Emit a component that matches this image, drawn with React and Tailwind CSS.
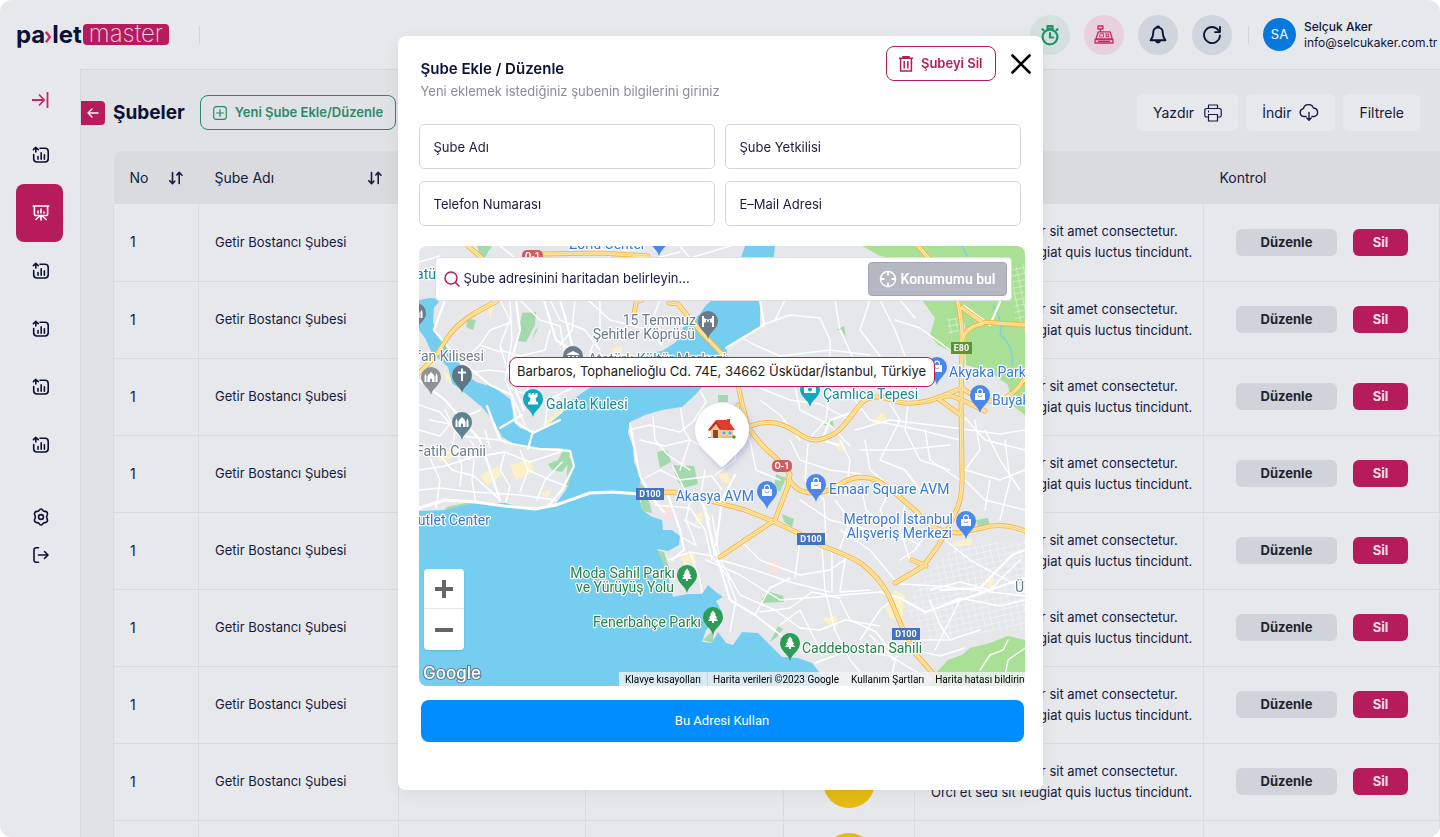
import { useState } from 'react'

const NAV_COUNT = 6
const rows = [1, 1, 1, 1, 1, 1, 1, 1, 1]

function ReportIcon() {
  return (
    <svg viewBox="0 0 18 18" className="w-[18px] h-[18px]" fill="none" stroke="currentColor" strokeWidth="1.6" strokeLinecap="round" strokeLinejoin="round">
      <path d="M8 2.2h5a3.2 3.2 0 0 1 3.2 3.2v7.4a3.2 3.2 0 0 1-3.2 3.2H4.9a3.2 3.2 0 0 1-3.2-3.2V8.5" />
      <path d="M3.8 6V1.800M1.400 3.600l2.400-2.200 2.400 2.200" />
      <path d="M6 10.500v2.700M9.200 6.800v6.400M12.400 8.800v4.400" />
    </svg>
  )
}

function BoardIcon() {
  return (
    <svg viewBox="0 0 18 18" className="w-[18px] h-[18px]" fill="none" stroke="currentColor" strokeWidth="1.6" strokeLinecap="round" strokeLinejoin="round">
      <path d="M1.200 2h15.600M2.400 2v8.200a1.300 1.300 0 0 0 1.300 1.300h10.600a1.300 1.300 0 0 0 1.300-1.300V2" />
      <path d="M6 9V7M9 9V5M12 9V8M9 11.500v4.500M7.800 12l-4 3.500M10.200 12l4 3.500" />
    </svg>
  )
}

function SortIcon() {
  return (
    <svg viewBox="0 0 16 14" className="w-4 h-[14px]" fill="none" stroke="currentColor" strokeWidth="1.6" strokeLinecap="round" strokeLinejoin="round">
      <path d="M4.500 1.500v11M1.700 9.800l2.800 2.800 2.300-2.400M11.200 12.500v-11M8.800 4l2.400-2.700L14 4.200" />
    </svg>
  )
}

function TimerIcon() {
  return (
    <svg viewBox="0 0 20 22" className="w-5 h-[22px]" fill="none" stroke="currentColor" strokeWidth="2.2" strokeLinecap="round" strokeLinejoin="round">
      <circle cx="10" cy="13" r="7.400" />
      <path d="M7.500 2h5v2.500h-5zM10 9v4.500h3.200M2.500 5.200l1 1M17.500 5.200l-1 1" />
    </svg>
  )
}

function RegisterIcon() {
  return (
    <svg viewBox="0 0 20 19" className="w-5 h-[19px]" fill="none" stroke="currentColor" strokeWidth="1.3" strokeLinejoin="round">
      <path d="M4 1h5v3H4zM6.500 4v2.800M4.300 6.800h12l2 7.200H1.900zM1 14.500h18V18H1zM4 16.300h12" />
      <path d="M6 8.700h3.500v3.200H5.400zM11.200 9h4M11.500 11.800h4M12.300 9v2.800M14.300 9v2.800" strokeWidth="0.9" />
    </svg>
  )
}

function BellIcon() {
  return (
    <svg viewBox="0 0 18 20" className="w-[18px] h-5" fill="none" stroke="currentColor" strokeWidth="1.9" strokeLinecap="round" strokeLinejoin="round">
      <path d="M9 2.600c-3 0-4.700 2.100-4.700 4.800 0 4-.8 5.600-2.700 7.900h14.800c-1.900-2.300-2.700-3.900-2.700-7.900C13.700 4.700 12 2.600 9 2.600zM7.700 2.200a1.500 1.500 0 0 1 2.600 0M6.800 15.800a2.300 2.300 0 0 0 4.400 0" />
    </svg>
  )
}

function RefreshIcon() {
  return (
    <svg viewBox="0 0 20 20" className="w-5 h-5" fill="none" stroke="currentColor" strokeWidth="1.8" strokeLinecap="round" strokeLinejoin="round">
      <path d="M18 10.500a8 8 0 1 1-1.600-5.300L17.800 7M18 2v5.100h-5" />
    </svg>
  )
}

function PrinterIcon() {
  return (
    <svg viewBox="0 0 18 18" className="w-[18px] h-[18px]" fill="none" stroke="currentColor" strokeWidth="1.2" strokeLinejoin="round">
      <path d="M4.500 4.500V1h9v3.500M4.500 13H2.400A1.600 1.600 0 0 1 .8 11.400V6.300a1.800 1.800 0 0 1 1.800-1.800h12.800a1.800 1.800 0 0 1 1.800 1.800v5.100a1.600 1.600 0 0 1-1.600 1.600h-2.100M4.500 10.500h9V17h-9z" />
      <path d="M4 7.500h1" strokeWidth="1.8" />
    </svg>
  )
}

function CloudIcon() {
  return (
    <svg viewBox="0 0 20 18" className="w-5 h-[18px]" fill="none" stroke="currentColor" strokeWidth="1.4" strokeLinecap="round" strokeLinejoin="round">
      <path d="M7 12.500H4.800a4 4 0 0 1-.4-7.900A5.300 5.300 0 0 1 14.500 4a4.300 4.300 0 0 1 .6 8.500H13M10 8.500V16M7.800 14l2.200 2.200 2.200-2.200" />
    </svg>
  )
}

/* ---------- map drawing ---------- */

const WATER = [
  'M419 300 L430 298 441 299 434 308 433 322 438 336 449 349 458 360 463 372 476 382 495 388 510 399 513 412 514 422 520 428 533 432 548 425 562 413 572 400 582 393 600 380 622 363 642 354 662 351 676 342 684 326 700 314 706 305 712 300 724 284 738 266 745 246 775 246 773 262 762 285 760 300 760 327 742 337 727 348 726 362 712 378 702 387 695 395 682 407 662 410 645 415 630 422 628 433 633 447 634 462 641 478 638 492 642 510 652 517 662 520 663 530 672 530 680 536 679 545 668 551 657 549 663 563 669 580 673 597 687 594 702 594 708 585 716 592 723 597 716 601 722 612 716 620 706 630 702 642 712 643 718 632 726 643 733 645 742 632 758 633 772 647 782 657 798 658 812 663 820 673 829 686 L419 686 419 511 445 510 475 503 505 503 532 510 555 505 568 487 573 467 571 450 558 448 528 448 512 443 502 437 495 423 482 407 465 393 452 383 448 367 432 353 425 338 419 330Z',
]

const GREEN = [
  'M862 246H1025V415L1012 405 1008 385 990 372 966 365 965 325 956 300 940 290 914 262 880 256Z',
  'M922 300H958L960 345 952 352 938 345 930 335 935 318Z',
  'M935 674 948 660 962 655 970 648 990 643 1008 636 1025 640V686H930Z',
  'M522 313 536 312 535 325 526 342 517 341Z',
  'M468 319 476 320 473 330 466 327Z',
  'M535 331 539 326 532 341Z',
  'M447 507 470 502 488 507 500 512 480 513 460 516 440 514Z',
  'M548 464 558 460 564 449 570 452 568 464 562 472 552 470Z',
  'M568 455 574 462 572 478 566 490Z',
  'M633 474 644 487 650 505 652 513 642 511 640 495Z',
  'M672 465 694 466 698 484 684 488 678 482Z',
  'M656 550 664 552 671 574 664 566Z',
  'M703 640 714 630 713 643Z',
  'M762 599 770 592 783 596 784 602 763 603Z',
  'M770 642 778 626 783 629 777 637Z',
  'M776 474 786 478 780 492 774 488Z',
  'M782 514 794 519 792 527 784 522Z',
  'M976 520 988 518 990 526 978 528Z',
  'M823 425 832 418 834 426Z',
  'M836 330 844 326 846 338 842 330Z',
  'M488 382 493 388 484 392Z',
  'M657 452 667 450 671 462 660 468Z',
  'M718 395H728V402H718Z',
  'M477 246H492L482 262Z',
]

const YELLOW = [
  'M444 372 456 378 452 384 446 380Z', 'M480 476 498 466 500 476 488 485Z', 'M510 465 530 460 534 472 516 480Z',
  'M870 425 882 412 887 420 876 424Z', 'M836 443 844 440 844 452 838 450Z', 'M822 618 836 616 838 626 830 626Z',
  'M680 555 694 552 696 562 684 565Z', 'M885 607 895 590 905 595 902 620 890 618Z', 'M556 412 568 408 562 424 542 426Z',
  'M488 308 494 306 490 320Z', 'M612 348 622 346 622 356 614 355Z', 'M550 276 556 298 544 290Z', 'M952 542 972 538 972 545 954 546Z',
  'M985 578 994 576 994 588 986 586Z', 'M695 514 703 512 702 524 696 524Z', 'M435 452 450 448 452 458 440 462Z', 'M540 494 552 488 548 498Z',
  'M718 474 728 472 732 484 722 482Z',
]

const PINK = ['M662 508 672 504 676 516 668 520 664 516Z', 'M768 562 778 560 780 574 770 572Z', 'M904 624 914 622 914 628 906 630Z', 'M680 458 688 454 684 462Z']

// white city streets, thin
const STREETS = [
  '419,448 440,455 452,470 474,476 500,500', '419,470 445,466 470,458 505,452 530,462 560,452', '474,460 472,480 476,503',
  '430,458 440,480 436,508', '419,490 440,488 474,492 520,495 556,500', '455,448 462,466 460,486', '505,452 500,470 510,486 506,502',
  '520,450 528,470 520,492', '528,470 550,480 566,486', '445,410 455,430 452,450 470,460', '419,405 440,412 460,436 498,440',
  '430,420 450,424 480,410', '470,440 480,456 505,452', '419,430 440,436 450,424', '537,500 545,480 562,462', '485,430 490,448',
  '445,300 470,296 500,300 510,320 500,345 510,380', '510,300 512,340 505,380 525,425', '520,300 540,320 560,326 564,350', '550,300 560,320 585,330 600,350',
  '575,300 572,330 560,345', '588,300 610,320 650,330', '600,300 600,330 590,352', '463,360 480,345 490,330 512,322', '475,372 490,370 505,372',
  '510,388 540,400 560,398', '500,350 520,356 545,350 550,330', '480,345 500,352', '545,426 548,400 572,388', '526,380 530,400',
  '419,262 440,256', '500,246 520,262', '600,246 612,260', '620,246 640,262 680,252', '660,300 648,330 662,345', '680,246 690,258 730,246',
  '628,430 650,425 680,432 695,420', '653,417 655,440 668,455 690,470', '640,440 665,446 690,440 712,452', '680,405 684,430 690,440 680,470',
  '645,478 660,470 680,480 712,476 722,490', '700,390 706,402 694,420', '705,470 700,500 710,520', '672,465 690,500 686,520 696,545',
  '655,505 690,508 705,530 712,560', '695,545 680,536', '668,560 690,552 712,556 730,580', '690,552 700,580 702,592', '684,520 700,528',
  '712,515 720,560 740,595 775,610 800,628', '706,560 740,575 780,600 830,596 880,592', '720,560 755,570 790,582 830,592',
  '740,540 760,560 800,575 830,570 850,556', '755,615 770,588 790,578', '800,540 795,578', '822,548 825,590 835,630 850,660 860,672',
  '832,550 832,592', '760,612 790,608 812,592 840,598', '780,625 800,610 815,640 822,656', '800,628 820,630 845,620 880,626',
  '840,600 850,620 876,632 890,650', '860,640 880,610 892,600', '845,560 840,592 870,590', '870,635 895,660 890,686', '815,663 850,650 890,656 930,680',
  '730,632 736,600 728,580', '740,430 735,460 715,475', '750,440 756,470 780,480', '760,400 780,415 800,440', '740,337 755,345 780,356 830,350 870,355',
  '762,325 790,315 820,318 830,340 830,356', '765,300 790,300 812,298', '835,300 840,330 852,356', '870,300 860,330 880,356', '880,300 895,330 905,356',
  '895,320 920,328 950,350', '900,300 915,318', '785,300 775,320', '795,387 800,410 830,425 850,446', '760,388 790,400 820,404 850,420', '830,387 826,420 808,440',
  '845,387 870,420 920,430 960,440', '855,430 890,420 940,426 1000,434 1025,430', '880,387 900,420 890,440', '910,387 905,430 920,460 950,470',
  '790,440 800,460 830,470 862,474', '808,444 805,480 824,500 826,540', '840,440 850,460 848,478', '865,440 870,470 890,486', '890,440 880,460 905,470 920,490',
  '860,450 900,450 950,445', '925,430 930,460 960,480', '800,500 830,520 870,530 905,540', '835,500 850,520 840,548', '860,482 866,510 890,530 920,545',
  '890,490 880,510 895,540', '905,505 900,530 910,560', '840,530 870,550 895,580', '960,412 985,440 1025,450', '975,420 980,450 965,470 1000,480 1025,470',
  '985,430 1000,460 1020,490', '965,480 985,500 1025,510', '990,480 985,510', '1005,440 1010,480 1000,520', '945,540 970,560 1025,590',
  '900,560 915,550 922,540 905,535', '930,590 960,582 990,590 1020,560', '900,584 940,586 1025,596', '945,604 960,598 1000,606 1025,600', '892,660 920,640 950,640 980,630',
  '930,600 940,625 950,640', '960,600 950,620 935,650', '915,650 940,656 965,648', '1003,686 1008,660 1025,648', '980,670 990,655 1003,650 1008,640',
]

const AVENUES = [
  '419,508 445,500 475,502 505,506 535,509 556,505 590,493 612,492 640,494', '487,406 500,440 512,444 540,449 570,451 574,466 562,490 548,506',
  '533,431 528,449', '500,428 522,415', '462,362 490,385 512,395 516,422 533,433 560,420', '445,300 434,330 460,362', '516,300 520,330 508,372 524,410',
  '544,300 556,340 575,352', '560,300 566,320 572,345', '630,424 634,446 640,476 652,498 664,512', '668,495 680,530 684,550 672,560', '702,498 715,555',
  '760,300 764,325 726,348', '964,306 990,325 1000,302', '735,475 722,500 716,545', '880,592 900,598 925,612 1025,578', '838,445 822,440 830,420 860,410',
  '940,590 980,588 1012,555 1025,550', '419,380 445,400 480,440 500,500', '705,508 712,540 730,600 755,615 800,650',
]

const HIGHWAYS = [
  'M918 246 L942 273 Q956 288 958 303 Q963 325 962 350 L961 400 962 470 Q963 500 955 513 Q945 540 922 567 L895 583',
  'M748 427 Q762 421 775 423 C795 426 800 440 817 440 C845 436 850 412 865 400 C880 392 890 402 905 403 C930 405 940 394 952 396 Q968 402 985 411',
  'M929 401 Q950 393 962 388 Q985 405 1000 400 T1025 378',
  'M669 303 L678 304 702 333 726 358 738 385 742 403 748 427 Q760 445 775 457 L790 474 788 486 775 520 745 540 720 557',
  'M640 493 L672 492 715 502 745 510 775 522 798 533 825 547 Q850 556 862 564 Q880 578 889 596 L902 627 915 653 937 678',
  'M788 478 Q796 492 810 493 Q830 493 842 483 Q865 470 888 487 L918 513 Q930 532 958 533 L982 528 Q1002 522 1025 531',
  'M497 301 L475 313 Q455 325 446 340 L435 357 419 373',
  'M542 254 L600 253 648 256 M468 246 L482 258 M962 308 L982 322 1025 325 M962 345 Q962 328 982 324',
  'M634 315 L636 302 642 300 M738 405 L735 425 748 427 M940 400 L962 416 M926 566 L912 560',
]

const SHIELDS = [
  { x: 772, y: 460, w: 20, text: 'O-1', fill: '#cd5f62', r: 5 },
  { x: 522, y: 250, w: 21, text: 'O-1', fill: '#cd5f62', r: 5 },
  { x: 636, y: 488, w: 28, text: 'D100', fill: '#4273c1', r: 0 },
  { x: 797, y: 533, w: 28, text: 'D100', fill: '#4273c1', r: 0 },
  { x: 892, y: 628, w: 28, text: 'D100', fill: '#4273c1', r: 0 },
  { x: 951, y: 342, w: 21, text: 'E80', fill: '#5b9430', r: 0 },
]

const GREY = '#6b7b8a'
const BLUE = '#3478d8'
const TEAL = '#16889b'
const PARK = '#23834a'

const LABELS = [
  { x: 696, y: 325, text: '15 Temmuz', fill: GREY, anchor: 'end' },
  { x: 695, y: 339, text: 'Şehitler Köprüsü', fill: GREY, anchor: 'end' },
  { x: 484, y: 361, text: 'Sveti Stefan Kilisesi', fill: GREY, anchor: 'end' },
  { x: 486, y: 456, text: 'Fatih Camii', fill: GREY, anchor: 'end' },
  { x: 588, y: 364, text: 'Atatürk Kültür Merkezi', fill: GREY },
  { x: 436, y: 279, text: 'Miniatü', fill: TEAL, anchor: 'end' },
  { x: 546, y: 409, text: 'Galata Kulesi', fill: TEAL },
  { x: 823, y: 399, text: 'Çamlıca Tepesi', fill: TEAL },
  { x: 569, y: 249, text: 'Zorlu Center', fill: BLUE },
  { x: 949, y: 377, text: 'Akyaka Park', fill: BLUE },
  { x: 992, y: 405, text: 'Buyaka', fill: BLUE },
  { x: 754, y: 501, text: 'Akasya AVM', fill: BLUE, anchor: 'end' },
  { x: 829, y: 494, text: 'Emaar Square AVM', fill: BLUE },
  { x: 953, y: 524, text: 'Metropol İstanbul', fill: BLUE, anchor: 'end' },
  { x: 952, y: 538, text: 'Alışveriş Merkezi', fill: BLUE, anchor: 'end' },
  { x: 490, y: 525, text: 'Outlet Center', fill: BLUE, anchor: 'end' },
  { x: 675, y: 578, text: 'Moda Sahil Parkı', fill: PARK, anchor: 'end' },
  { x: 674, y: 592, text: 've Yürüyüş Yolu', fill: PARK, anchor: 'end' },
  { x: 701, y: 627, text: 'Fenerbahçe Parkı', fill: PARK, anchor: 'end' },
  { x: 802, y: 653, text: 'Caddebostan Sahili', fill: PARK },
  { x: 1015, y: 592, text: 'Ümraniye', fill: GREY },
]

// glyphs are centred on 0,0 of the pin's head
const GLYPHS = {
  bag: 'M-5 -2H5V5H-5ZM-3 -2V-3.500A3 3 0 0 1 3 -3.500V-2H1.800V-3.500A1.800 1.800 0 0 0 -1.800 -3.500V-2ZM-2.500 0.500Q0 4 2.500 0.500L1.700 0.200Q0 2.600 -1.700 0.200Z',
  tree: 'M0 -6.500 3 -2.500H1.800L4.200 1H2.800L5 4H1V6H-1V4H-5L-2.800 1H-4.200L-1.800 -2.500H-3Z',
  mosque: 'M-6.500 5V-1L-5.500 -3.500 -4.500 -1V5ZM6.500 5V-1L5.500 -3.500 4.500 -1V5ZM-3.600 5V0Q-3.400 -2 0 -5 3.400 -2 3.600 0V5H1V2.500A1 1 0 0 0 -1 2.500V5Z',
  cross: 'M-1 -6.500H1V-3.500H4V-1.500H1V6H-1V-1.500H-4V-3.500H-1Z',
  tower: 'M-4.500 -6H-2.500V-4.500H-1V-6H1V-4.500H2.500V-6H4.500V-2L2.500 -1 3.500 3H5V5.500H-5V3H-3.500L-2.500 -1 -4.500 -2Z',
  bridge: 'M-6 -5H-4V-3Q0 0 4 -3V-5H6V6H4V2Q0 -1 -4 2V6H-6ZM-2 -2H-1V1H-2ZM1 -2H2V1H1Z',
  museum: 'M0 -5 6 -2V-1H-6V-2ZM-5 0H-3V4H-5ZM-1 0H1V4H-1ZM3 0H5V4H3ZM-6 5H6V6H-6Z',
  camera: 'M-6 -3H-2.500L-1.500 -4.500H1.500L2.500 -3H6V4H-6ZM0 -1.500A2 2 0 1 0 0 2.500 2 2 0 0 0 0 -1.500Z',
}

const PINS = [
  { x: 708, y: 321, fill: GREY, glyph: 'bridge' },
  { x: 573, y: 356, fill: GREY, glyph: 'museum' },
  { x: 416, y: 313, fill: GREY, glyph: 'mosque' },
  { x: 431, y: 377, fill: '#8f9295', glyph: 'mosque' },
  { x: 462, y: 375, fill: '#5f7784', glyph: 'cross' },
  { x: 462, y: 422, fill: '#5f8192', glyph: 'mosque' },
  { x: 533, y: 399, fill: '#12a8bd', glyph: 'tower' },
  { x: 810, y: 389, fill: '#12a8bd', glyph: 'camera' },
  { x: 659, y: 238, fill: '#4a86ec', glyph: 'bag' },
  { x: 937, y: 367, fill: '#4a86ec', glyph: 'bag' },
  { x: 980, y: 395, fill: '#4a86ec', glyph: 'bag' },
  { x: 767, y: 491, fill: '#4a86ec', glyph: 'bag' },
  { x: 816, y: 484, fill: '#4a86ec', glyph: 'bag' },
  { x: 966, y: 521, fill: '#4a86ec', glyph: 'bag' },
  { x: 687, y: 575, fill: '#2d9c55', glyph: 'tree' },
  { x: 713, y: 617, fill: '#2d9c55', glyph: 'tree' },
  { x: 790, y: 643, fill: '#2d9c55', glyph: 'tree' },
]

function CityMap() {
  return (
    <svg viewBox="419 246 606 440" preserveAspectRatio="xMidYMid slice" className="block w-full h-full" aria-label="İstanbul haritası" role="img">
      <defs>
        <pattern id="blocks" width="7" height="6" patternUnits="userSpaceOnUse" patternTransform="rotate(-12)">
          <path d="M0 0H7M0 0V6" stroke="#fff" strokeWidth="1" fill="none" />
        </pattern>
        <filter id="pinShadow" x="-30%" y="-30%" width="170%" height="170%">
          <feDropShadow dx="3" dy="3" stdDeviation="3" floodColor="#7a6bb5" floodOpacity="0.35" />
        </filter>
      </defs>
      <rect x="419" y="246" width="606" height="440" fill="#e6e7eb" />
      {YELLOW.map((d, i) => <path key={i} d={d} fill="#fbf1c8" />)}
      {PINK.map((d, i) => <path key={i} d={d} fill="#fadfdf" />)}
      {GREEN.map((d, i) => <path key={i} d={d} fill={i < 3 ? '#aadf96' : '#a3d9ac'} />)}
      <path d="M925 575 955 545 1025 540V630L985 632 930 640 905 610Z" fill="url(#blocks)" opacity="0.7" />
      <path d="M1012 270 1025 262V330L1015 320ZM948 318H958V334H948Z" fill="url(#blocks)" opacity="0.8" />
      <g fill="none" stroke="#fff" strokeLinejoin="round" strokeLinecap="round">
        {STREETS.map((p, i) => <polyline key={i} points={p} strokeWidth="1.4" />)}
      </g>
      {WATER.map((d, i) => <path key={i} d={d} fill="#75cef0" />)}
      <path d="M962 246Q970 262 990 290M993 306Q1004 320 1000 335 1014 345 1012 365" fill="none" stroke="#75cef0" strokeWidth="1.2" />
      <g fill="none" stroke="#fff" strokeLinejoin="round" strokeLinecap="round">
        {AVENUES.map((p, i) => <polyline key={i} points={p} strokeWidth={i === 0 ? 3 : 2.2} />)}
      </g>
      <g fill="none" strokeLinejoin="round" strokeLinecap="round">
        {HIGHWAYS.map((d, i) => <path key={i} d={d} stroke="#f5b547" strokeWidth="5" />)}
        {HIGHWAYS.map((d, i) => <path key={i} d={d} stroke="#fde9a6" strokeWidth="3.2" />)}
        {HIGHWAYS.map((d, i) => <path key={i} d={d} stroke="#f7c668" strokeWidth="0.7" />)}
      </g>
      {SHIELDS.map((s, i) => (
        <g key={i}>
          <rect x={s.x} y={s.y} width={s.w} height="12" rx={s.r} fill={s.fill} />
          <text x={s.x + s.w / 2} y={s.y + 9} textAnchor="middle" fill="#fff" className="font-['Roboto',sans-serif] text-[9px] font-bold">{s.text}</text>
        </g>
      ))}
      {LABELS.map(l => (
        <text key={l.text} x={l.x} y={l.y} textAnchor={l.anchor || 'start'} fill={l.fill} stroke="#fff" strokeWidth="2.4" strokeLinejoin="round" paintOrder="stroke" className="font-['Roboto',sans-serif] text-[14px]">{l.text}</text>
      ))}
      {PINS.map((p, i) => (
        <g key={i} transform={`translate(${p.x} ${p.y})`}>
          <path d="M0 18C-1.500 11-10 8-10 0A10 10 0 0 1 10 0C10 8 1.500 11 0 18Z" fill={p.fill} />
          <path d={GLYPHS[p.glyph]} fill="#fff" fillRule="evenodd" />
        </g>
      ))}
      {/* selected branch */}
      <path d="M724 466Q722 468 720 466L703 449A27 27 0 1 1 741 449Z" fill="#fff" filter="url(#pinShadow)" />
      <g>
        <path d="M708 437H735V438H708Z" fill="#6aa84f" />
        <path d="M711 429 716 423 721 429V438H711Z" fill="#f8c98a" />
        <path d="M721 429H733V438H721Z" fill="#f5b66f" />
        <path d="M716 420H728L735 430H722Z" fill="#e8392f" />
        <path d="M708 430 716 420 722 429 720 430 716 424 710 431Z" fill="#c72d28" />
        <path d="M727 419H730V424H727Z" fill="#b5502f" />
        <path d="M713 430H718V438H713Z" fill="#8c4a25" />
        <path d="M722 431H726V435H722ZM728 431H732V435H728Z" fill="#5aa6d8" stroke="#fff" strokeWidth="0.7" />
        <circle cx="734" cy="437" r="1.800" fill="#4d9a3a" />
      </g>
    </svg>
  )
}

function Field({ label, type = 'text' }) {
  return (
    <input
      type={type}
      aria-label={label}
      placeholder={label}
      className="h-[45px] min-w-0 rounded-[5px] border border-[#d6d7da] bg-white px-3.5 text-[13px] text-[#151a40] placeholder:text-[#151a40] outline-none"
    />
  )
}

function BranchModal() {
  const [search, setSearch] = useState('')
  return (
    <div className="fixed inset-0 flex items-start justify-center pt-9">
      <div role="dialog" aria-labelledby="modal-title" className="w-[645px] max-w-full rounded-lg bg-white px-5 pt-2.5 pb-12 shadow-[0_4px_16px_rgba(0,0,0,0.06)]">
        <div className="flex items-start justify-between">
          <div className="pl-[3px] pt-3">
            <h2 id="modal-title" className="text-[15px] leading-[22px] font-semibold text-[#0b1237]">Şube Ekle / Düzenle</h2>
            <p className="text-[13px] leading-[22px] text-[#8b8c99]">Yeni eklemek istediğiniz şubenin bilgilerini giriniz</p>
          </div>
          <div className="-mr-2 flex items-center gap-[15px]">
            <button className="flex h-[35px] items-center gap-2 rounded-lg border border-[#b61b5c] px-3 text-[13px] font-semibold text-[#b61b5c]">
              <svg viewBox="0 0 14 16" className="h-4 w-3.5" fill="none" stroke="currentColor" strokeWidth="1.5">
                <path d="M0 2.300h14M4 2V.8h6V2M1.600 2.300V15h10.800V2.300M5.200 5v7.500M8.800 5v7.500" />
              </svg>
              Şubeyi Sil
            </button>
            <button aria-label="Kapat">
              <svg viewBox="0 0 20 20" className="h-5 w-5" stroke="#000" strokeWidth="2.6" strokeLinecap="round">
                <path d="M1.500 1.500l17 17M18.500 1.500l-17 17" />
              </svg>
            </button>
          </div>
        </div>

        <div className="mt-[22px] ml-px mr-0.5 grid grid-cols-2 gap-x-2.5 gap-y-3">
          <Field label="Şube Adı" />
          <Field label="Şube Yetkilisi" />
          <Field label="Telefon Numarası" type="tel" />
          <Field label="E–Mail Adresi" type="email" />
        </div>

        <div className="relative ml-px -mr-0.5 mt-5 h-[440px] overflow-hidden rounded-lg">
          <CityMap />

          <div className="absolute left-4 right-[13px] top-[11px] flex h-11 items-center gap-1 rounded border border-[#dddde2] bg-white pl-2 pr-1">
            <svg viewBox="0 0 16 16" className="h-4 w-4 shrink-0" fill="none" stroke="#b61b5c" strokeWidth="1.5" strokeLinecap="round">
              <circle cx="7" cy="7" r="6" />
              <path d="M11.500 11.500l3.500 3.500" />
            </svg>
            <input
              aria-label="Şube adresi"
              value={search}
              onChange={e => setSearch(e.target.value)}
              placeholder="Şube adresinini haritadan belirleyin..."
              className="min-w-0 flex-1 text-[13px] text-[#151a40] placeholder:text-[#151a40] outline-none"
            />
            <button className="flex h-[34px] shrink-0 items-center gap-1 rounded border border-[#a3a5b0] bg-[#b5b7c3] px-2.5 font-['Roboto',sans-serif] text-sm font-semibold text-white">
              <svg viewBox="0 0 18 18" className="h-[18px] w-[18px]" fill="none" stroke="currentColor" strokeWidth="1.5">
                <circle cx="9" cy="9" r="7.500" />
                <path d="M9 1.500v4M9 12.500v4M1.500 9h4M12.500 9h4" strokeWidth="2" />
              </svg>
              Konumumu bul
            </button>
          </div>

          <div className="absolute left-[90px] right-[90px] top-[111px] flex h-[30px] items-center justify-center whitespace-nowrap rounded-lg border border-[#b61b5c] bg-white text-[13px] text-[#1b1b22]">
            Barbaros, Tophanelioğlu Cd. 74E, 34662 Üsküdar/İstanbul, Türkiye
          </div>

          <div className="absolute bottom-9 left-[5px] flex w-10 flex-col divide-y divide-[#e6e6e6] rounded-sm bg-white shadow">
            <button aria-label="Yakınlaştır" className="flex h-10 items-center justify-center">
              <svg viewBox="0 0 18 18" className="h-[18px] w-[18px]" stroke="#666" strokeWidth="4"><path d="M0 9h18M9 0v18" /></svg>
            </button>
            <button aria-label="Uzaklaştır" className="flex h-[41px] items-center justify-center">
              <svg viewBox="0 0 18 18" className="h-[18px] w-[18px]" stroke="#666" strokeWidth="4"><path d="M0 9h18" /></svg>
            </button>
          </div>

          <svg viewBox="0 0 66 24" className="absolute bottom-0 left-0.5 h-6 w-[66px]" role="img" aria-label="Google">
            <text x="2" y="17" fill="#fff" stroke="#5f7f99" strokeWidth="2" paintOrder="stroke" className="font-['Inter',sans-serif] text-[17px] font-medium">Google</text>
          </svg>

          <div className="absolute bottom-0 right-0 flex h-3.5 items-center whitespace-nowrap bg-[#f1f3f5]/80 font-['Roboto',sans-serif] text-[10px] text-black">
            <button className="px-1.5">Klavye kısayolları</button>
            <span className="border-l border-[#b9dcec] px-[5px]">Harita verileri ©2023 Google</span>
            <a href="#terms" className="px-[7px]">Kullanım Şartları</a>
            <a href="#report" className="pl-1">Harita hatası bildirin</a>
          </div>
        </div>

        <div className="mt-3.5 ml-[3px] -mr-px flex">
          <button className="h-[42px] flex-1 rounded-lg bg-[#008dff] font-['Roboto',sans-serif] text-[13px] text-white">
            Bu Adresi Kullan
          </button>
        </div>
      </div>
    </div>
  )
}

function TopBar() {
  return (
    <header className="flex h-[69px] shrink-0 items-center justify-between pl-4 pr-[7px]">
      <div className="flex items-center">
        <div className="flex items-center">
          <span className="text-2xl leading-6 font-bold text-[#0b1237]">pa</span>
          <svg viewBox="0 0 8 14" className="mt-1 h-3.5 w-[7px]" fill="none" stroke="#d12a63" strokeWidth="2.8"><path d="M1 1l4.500 6L1 13" /></svg>
          <span className="text-2xl leading-6 font-bold text-[#0b1237]">let</span>
          <span className="ml-px flex h-[21px] w-[86px] items-center justify-center rounded-sm bg-[#b61b5c] pb-0.5 text-2xl leading-5 font-extralight text-[#f3d6e2]">master</span>
        </div>
        <span className="ml-[30px] h-[18px] w-px bg-[#d3d5da]" />
      </div>
      <div className="flex items-center">
        <div className="flex gap-3.5">
          <button aria-label="Süre" className="flex h-10 w-10 items-center justify-center rounded-full bg-[#d3e0de] text-[#21936a]"><TimerIcon /></button>
          <button aria-label="Kasa" className="flex h-10 w-10 items-center justify-center rounded-full bg-[#e9d1dc] text-[#c92763]"><RegisterIcon /></button>
          <button aria-label="Bildirimler" className="flex h-10 w-10 items-center justify-center rounded-full bg-[#d0d4dc] text-[#0b1237]"><BellIcon /></button>
          <button aria-label="Yenile" className="flex h-10 w-10 items-center justify-center rounded-full bg-[#d0d4dc] text-[#0b1237]"><RefreshIcon /></button>
        </div>
        <span className="ml-4 h-[18px] w-px bg-[#d3d5da]" />
        <div className="ml-3.5 flex h-[33px] w-[33px] items-center justify-center rounded-full bg-[#0878dc] text-[13px] text-white">SA</div>
        <div className="ml-2 w-[129px] text-[12px] leading-4 text-[#0f1538]">
          <div className="font-medium">Selçuk Aker</div>
          <div className="whitespace-nowrap">info@selcukaker.com.tr</div>
        </div>
      </div>
    </header>
  )
}

function Sidebar() {
  return (
    <aside className="flex w-20 shrink-0 flex-col items-center pr-px pt-[23px] text-[#0b1237]">
      <button aria-label="Menüyü aç" className="mb-[18px] text-[#c92763]">
        <svg viewBox="0 0 18 16" className="h-4 w-[18px]" fill="none" stroke="currentColor" strokeWidth="1.8" strokeLinejoin="round">
          <path d="M1 8h12M8 2.500L13.200 8 8 13.500M16.500 0v16" />
        </svg>
      </button>
      <nav className="flex flex-col items-center">
        {Array.from({ length: NAV_COUNT }, (_, i) => i === 1 ? (
          <a key={i} href="#subeler" aria-label="Şubeler" className="flex h-[58px] w-[47px] items-center justify-center rounded-lg bg-[#b61b5c] pl-[3px] text-white"><BoardIcon /></a>
        ) : (
          <a key={i} href="#rapor" aria-label="Rapor" className="flex h-[58px] w-[47px] items-center justify-center pl-[3px]"><ReportIcon /></a>
        ))}
        <a href="#ayarlar" aria-label="Ayarlar" className="mt-6 flex h-[38px] items-center pl-[3px]">
          <svg viewBox="0 0 18 18" className="h-[18px] w-[18px]" fill="none" stroke="currentColor" strokeWidth="1.6" strokeLinejoin="round">
            <path d="M7.300 2.200a1.800 1.800 0 0 1 3.400 0c.5 1 1.100 1.300 2.200 1.200 2-.1 3.300 1.900 2.300 3.600-.7 1.100-.7 2.900 0 4 1 1.700-.3 3.700-2.300 3.600-1.100-.1-1.700.2-2.200 1.200a1.800 1.800 0 0 1-3.400 0c-.5-1-1.100-1.300-2.200-1.200-2 .1-3.300-1.900-2.300-3.600.7-1.100.7-2.900 0-4-1-1.700.3-3.700 2.300-3.600 1.100.1 1.700-.2 2.200-1.200z" />
            <circle cx="9" cy="9" r="2.400" />
          </svg>
        </a>
        <a href="#cikis" aria-label="Çıkış" className="flex h-[38px] items-center pl-[3px]">
          <svg viewBox="0 0 18 18" className="h-[18px] w-[18px]" fill="none" stroke="currentColor" strokeWidth="1.6" strokeLinecap="round" strokeLinejoin="round">
            <path d="M6.500 1.800H4a2 2 0 0 0-2 2v10.400a2 2 0 0 0 2 2h2.500M6.500 9H16M12.500 5.500L16 9l-3.500 3.500" />
          </svg>
        </a>
      </nav>
    </aside>
  )
}

function BranchTable() {
  return (
    <table className="w-full table-fixed border-collapse text-left text-[#151a40]">
      <colgroup>
        <col className="w-[85px]" />
        <col className="w-[200px]" />
        <col className="w-[187px]" />
        <col className="w-[198px]" />
        <col className="w-[131px]" />
        <col className="w-[289px]" />
        <col />
      </colgroup>
      <thead>
        <tr className="h-[53px] text-sm">
          <th className="rounded-tl-lg bg-[#d9dbdf] pl-4 font-normal">
            <span className="flex items-center gap-5">No <SortIcon /></span>
          </th>
          <th className="bg-[#d9dbdf] px-4 font-normal">
            <span className="flex items-center justify-between">Şube Adı <SortIcon /></span>
          </th>
          <th className="bg-[#d9dbdf]" />
          <th className="bg-[#d9dbdf]" />
          <th className="bg-[#d9dbdf]" />
          <th className="bg-[#d9dbdf]" />
          <th className="bg-[#d9dbdf] px-4 font-normal">Kontrol</th>
        </tr>
      </thead>
      <tbody>
        {rows.map((no, i) => (
          <tr key={i} className="h-[77px] border-b border-[#d9dbe0] bg-[#e6e8ec] text-[13px]">
            <td className="border-x border-[#d9dbe0] pl-4 text-sm">{no}</td>
            <td className="whitespace-nowrap border-r border-[#d9dbe0] px-4">Getir Bostancı Şubesi</td>
            <td className="border-r border-[#d9dbe0]" />
            <td className="border-r border-[#d9dbe0]" />
            <td className="border-r border-[#d9dbe0]">
              <span className="mx-auto block h-[52px] w-[52px] rounded-full bg-[#e5bb13]" />
            </td>
            <td className="whitespace-nowrap border-r border-[#d9dbe0] px-4 leading-[21px]">
              Lorem ipsum dolor sit amet consectetur.<br />
              Orci et sed sit feugiat quis luctus tincidunt.
            </td>
            <td className="border-r border-[#d9dbe0]">
              <div className="flex gap-4 pl-8">
                <button className="h-[27px] w-[101px] rounded-md bg-[#d0d4da] font-bold text-[#22232c]">Düzenle</button>
                <button className="h-[27px] w-[55px] rounded-md bg-[#b61b5c] font-bold text-[#f6dfe8]">Sil</button>
              </div>
            </td>
          </tr>
        ))}
      </tbody>
    </table>
  )
}

export default function App() {
  return (
    <div className="h-screen overflow-hidden bg-white font-['Inter',sans-serif]">
      <div className="flex h-full flex-col overflow-hidden rounded-xl bg-[#e6e8ec]">
        <TopBar />
        <div className="flex min-h-0 flex-1">
          <Sidebar />
          <main className="min-w-0 flex-1 overflow-hidden border-l border-t border-[#d6d8dd] bg-[#e0e2e5] pt-6">
            <div className="mb-5 flex h-[37px] items-center justify-between pr-5">
              <div className="flex items-center">
                <button aria-label="Geri" className="flex h-6 w-6 items-center justify-center rounded-r bg-[#b61b5c]">
                  <svg viewBox="0 0 12 10" className="h-2.5 w-3" fill="none" stroke="#fff" strokeWidth="1.3" strokeLinecap="round" strokeLinejoin="round"><path d="M11 5H1M5 1L1 5l4 4" /></svg>
                </button>
                <h1 className="ml-2 text-[19px] leading-6 font-bold text-[#0b1237]">Şubeler</h1>
                <button className="ml-[15px] flex h-[35px] items-center gap-2 rounded-lg border border-[#2a8a67] px-3 text-[13px] font-semibold text-[#2a8a67]">
                  <svg viewBox="0 0 14 14" className="h-3.5 w-3.5" fill="none" stroke="currentColor" strokeWidth="1.2" strokeLinecap="round">
                    <rect x="0.700" y="0.700" width="12.600" height="12.600" rx="2.500" />
                    <path d="M7 3.500v7M3.500 7h7" />
                  </svg>
                  Yeni Şube Ekle/Düzenle
                </button>
              </div>
              <div className="flex gap-2 text-sm text-[#151a40]">
                <button className="flex h-[37px] items-center gap-2.5 rounded-md bg-[#e6e8ec] px-4">Yazdır <PrinterIcon /></button>
                <button className="flex h-[37px] items-center gap-2 rounded-md bg-[#e6e8ec] px-4">İndir <CloudIcon /></button>
                <button className="h-[37px] rounded-md bg-[#e6e8ec] px-4">Filtrele</button>
              </div>
            </div>
            <div className="pl-8">
              <BranchTable />
            </div>
          </main>
        </div>
      </div>
      <BranchModal />
    </div>
  )
}
